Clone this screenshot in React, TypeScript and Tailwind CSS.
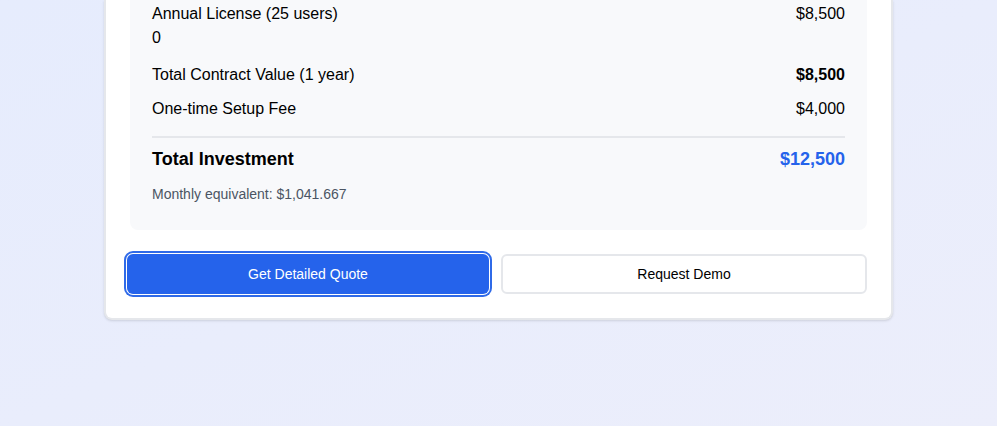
export default function App() {
  return (
    <div className="min-h-[426px] bg-gradient-to-br from-[#e6ecfd] to-[#eceefb] font-['Liberation_Sans',Arial,sans-serif] text-black">
      <div className="mx-auto w-[789px] rounded-b-lg border-2 border-t-0 border-[#e5e7eb] bg-white px-6 pb-6 shadow-sm">
        <div className="rounded-b-lg bg-[#f8f9fb] px-[22px] pb-[26px] pt-[2px]">
          <div className="flex justify-between text-base leading-6">
            <div>
              <div>Annual License (25 users)</div>
              <div>0</div>
            </div>
            <div>$8,500</div>
          </div>
          <div className="mt-[13px] flex justify-between text-base leading-6">
            <span>Total Contract Value (1 year)</span>
            <span className="font-bold">$8,500</span>
          </div>
          <div className="mt-[10px] flex justify-between text-base leading-6">
            <span>One-time Setup Fee</span>
            <span>$4,000</span>
          </div>
          <div className="mt-[15px] border-t-2 border-[#e5e7eb] pt-[7px]">
            <div className="flex justify-between text-lg font-bold leading-7">
              <span>Total Investment</span>
              <span className="text-[#2563eb]">$12,500</span>
            </div>
            <div className="mt-[11px] text-sm leading-5 text-[#4b5563]">Monthly equivalent: $1,041.667</div>
          </div>
        </div>
        <div className="mt-6 flex gap-3">
          <button className="-ml-[3px] h-10 w-[362px] rounded-md bg-[#2563eb] text-sm text-white ring-2 ring-[#2f6ae8] ring-offset-1">
            Get Detailed Quote
          </button>
          <button className="h-10 flex-1 rounded-md border-2 border-[#e5e7eb] bg-white text-sm text-black">
            Request Demo
          </button>
        </div>
      </div>
    </div>
  );
}
